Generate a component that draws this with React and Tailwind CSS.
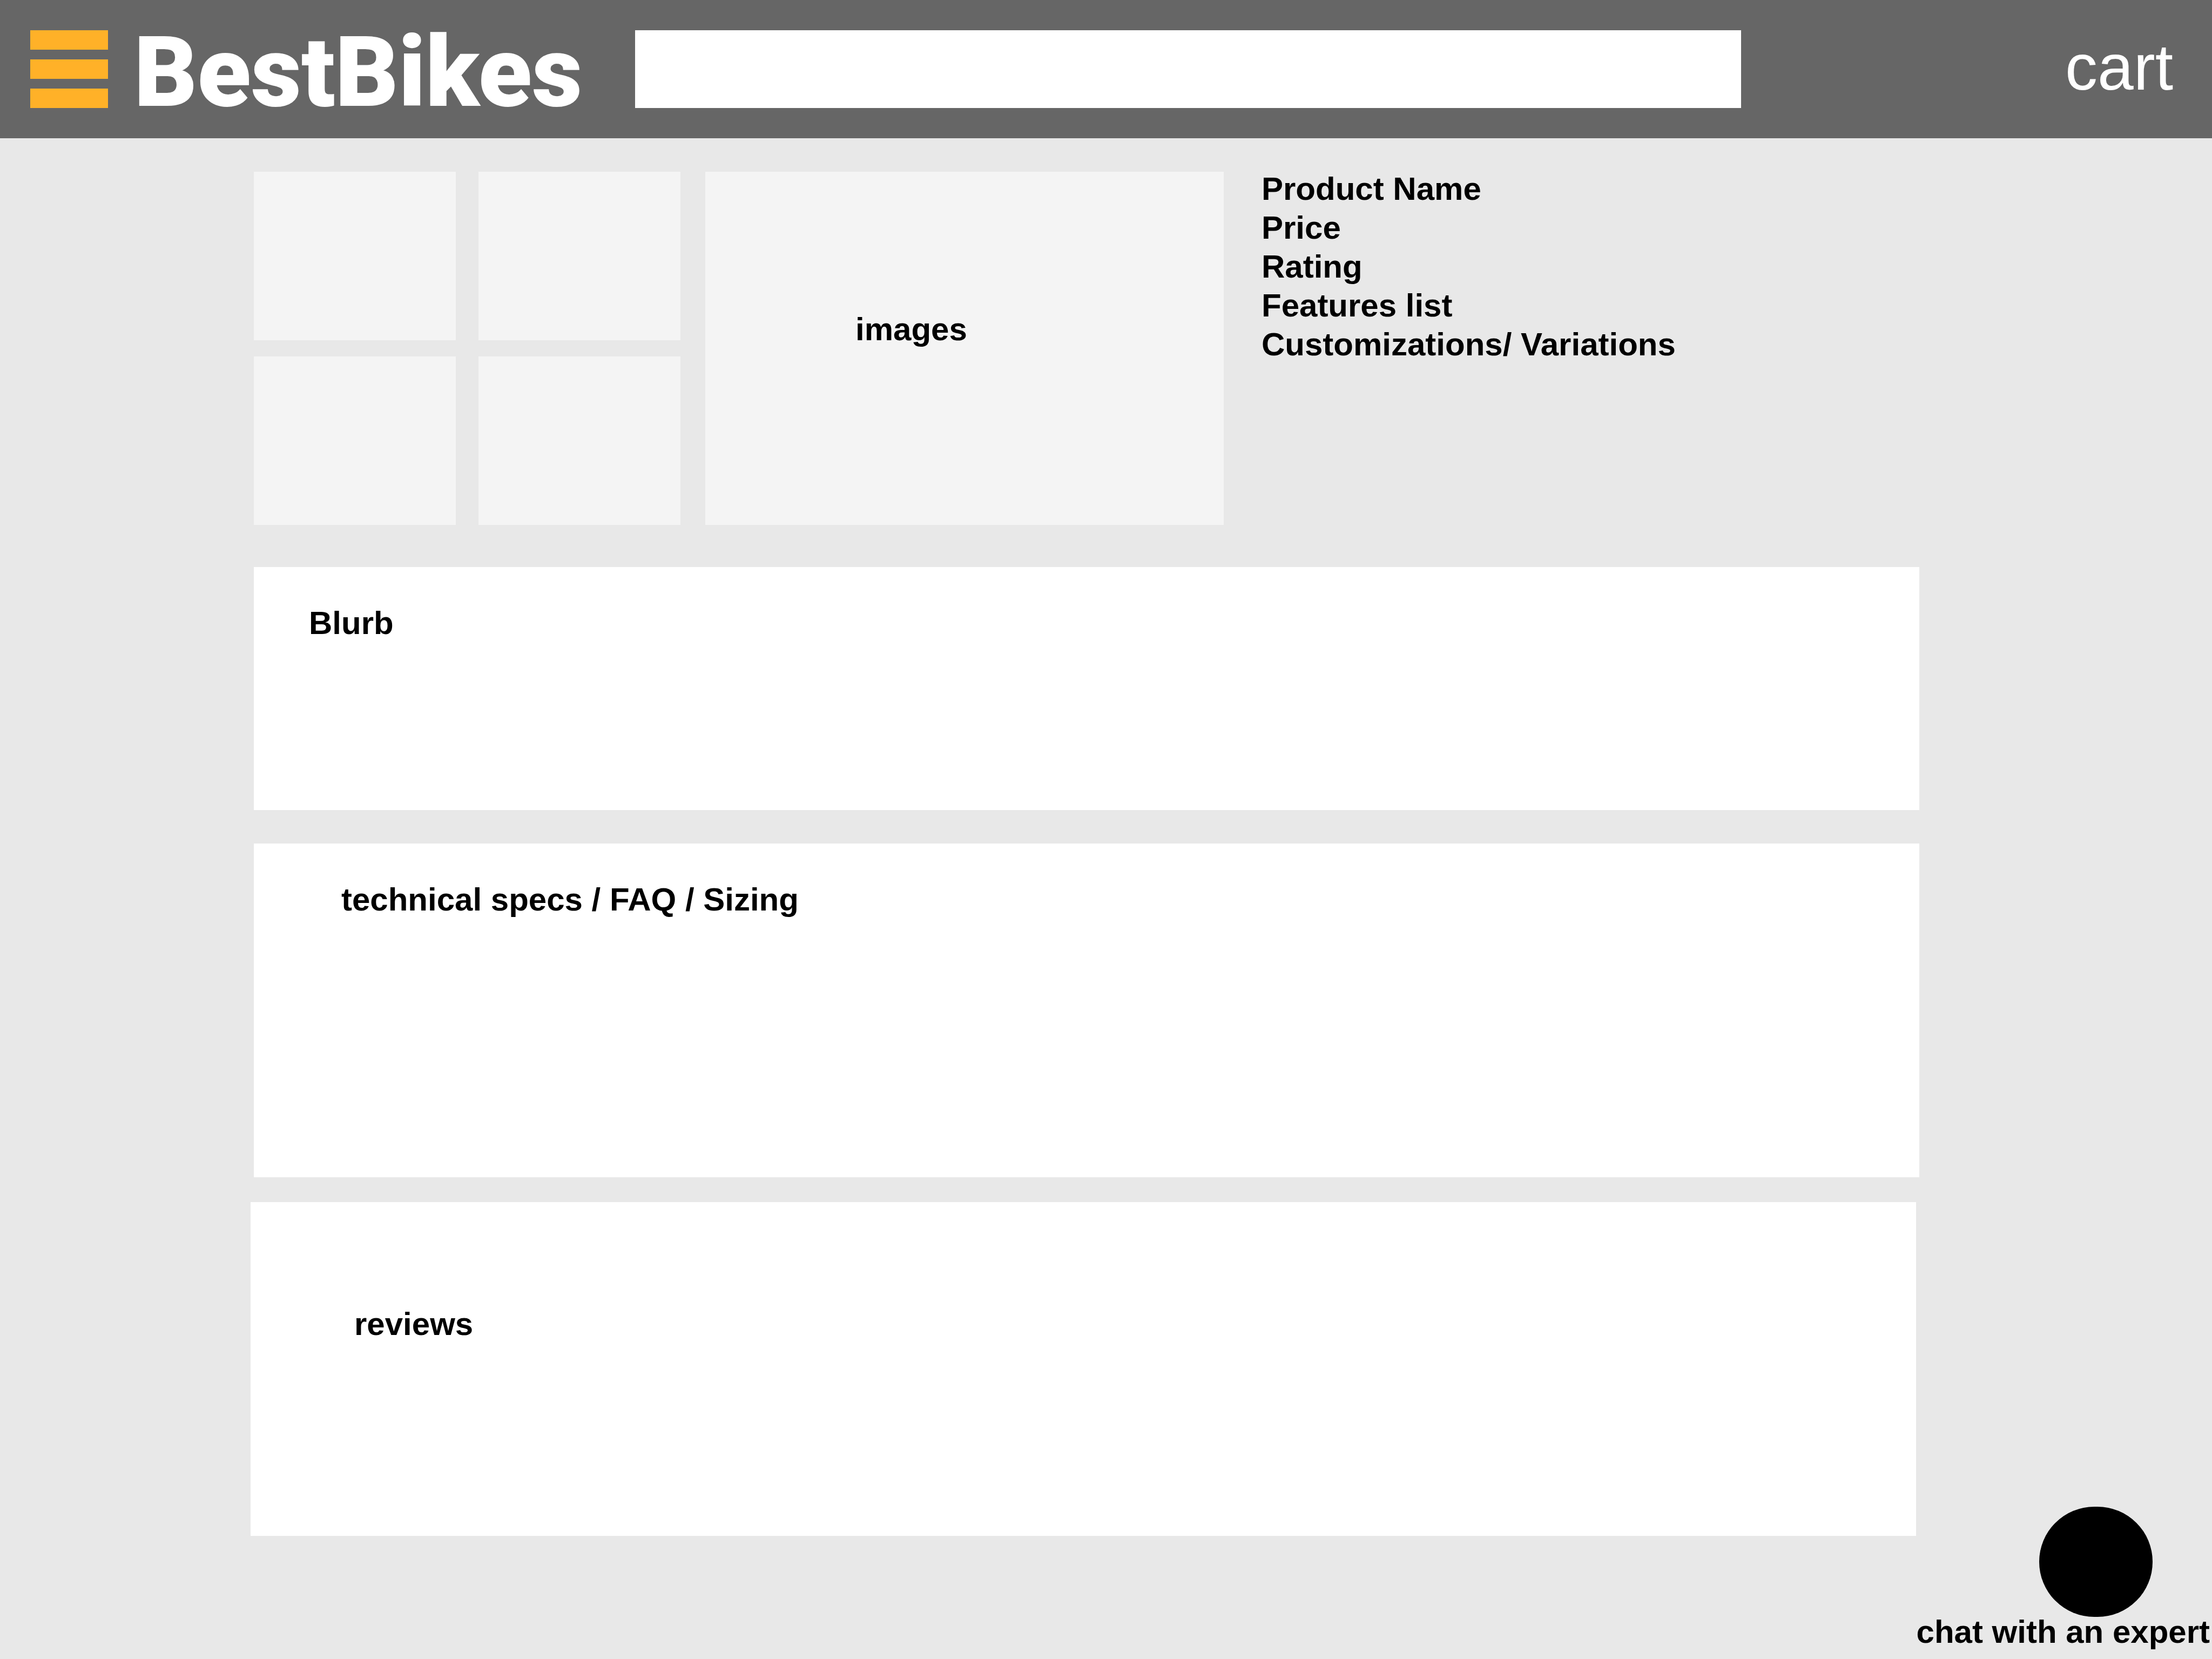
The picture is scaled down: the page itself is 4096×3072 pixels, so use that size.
function Tile() {
  return <div className="bg-[#f4f4f4]" />;
}

export default function App() {
  return (
    <div className="min-h-screen bg-[#e8e8e8] font-['Liberation_Sans',Arial,sans-serif] text-black">
      <header className="flex h-64 items-center bg-[#666666] pr-[72px] pl-14 text-white">
        <button type="button" aria-label="Menu" className="flex w-36 shrink-0 flex-col gap-[18px]">
          <span className="h-9 w-full bg-[#ffb128]" />
          <span className="h-9 w-full bg-[#ffb128]" />
          <span className="h-9 w-full bg-[#ffb128]" />
        </button>
        <a href="#" className="mt-3 ml-12 w-[928px] shrink-0 font-['Roboto',sans-serif] text-[182px] leading-none font-black whitespace-nowrap">
          BestBikes
        </a>
        <input type="search" aria-label="Search" className="h-36 w-[2048px] bg-white px-8 text-[60px] text-black outline-none" />
        <a href="#cart" className="mb-2 ml-auto text-[120px] leading-none">cart</a>
      </header>

      <main className="mr-[542px] ml-[470px] flex flex-col pt-[62px] text-[60px] leading-[72px] font-bold">
        <section className="flex h-[654px]">
          <div className="grid w-[790px] shrink-0 grid-cols-2 grid-rows-2 gap-x-[42px] gap-y-[30px]">
            <Tile />
            <Tile />
            <Tile />
            <Tile />
          </div>
          <div className="ml-[46px] w-[960px] shrink-0 bg-[#f4f4f4] pt-64 pl-[278px]">images</div>
          <ul className="-mt-1 ml-[70px] whitespace-nowrap">
            <li>Product Name</li>
            <li>Price</li>
            <li>Rating</li>
            <li>Features list</li>
            <li>Customizations/ Variations</li>
          </ul>
        </section>
        <section className="mt-[78px] h-[450px] bg-white pt-[68px] pl-[102px]">
          <h2>Blurb</h2>
        </section>
        <section className="mt-[62px] h-[618px] bg-white pt-[68px] pl-[162px]">
          <h2>technical specs / FAQ / Sizing</h2>
        </section>
        <section className="mt-[46px] mr-[6px] -ml-[6px] h-[618px] bg-white pt-[190px] pl-[192px]">
          <h2>reviews</h2>
        </section>
      </main>

      <button type="button" className="fixed right-1 bottom-0 flex flex-col pb-[22px] text-[60px] leading-[56px] font-bold">
        <span className="mr-[106px] h-[204px] w-[210px] self-end rounded-full bg-black" />
        <span>chat with an expert</span>
      </button>
    </div>
  );
}
